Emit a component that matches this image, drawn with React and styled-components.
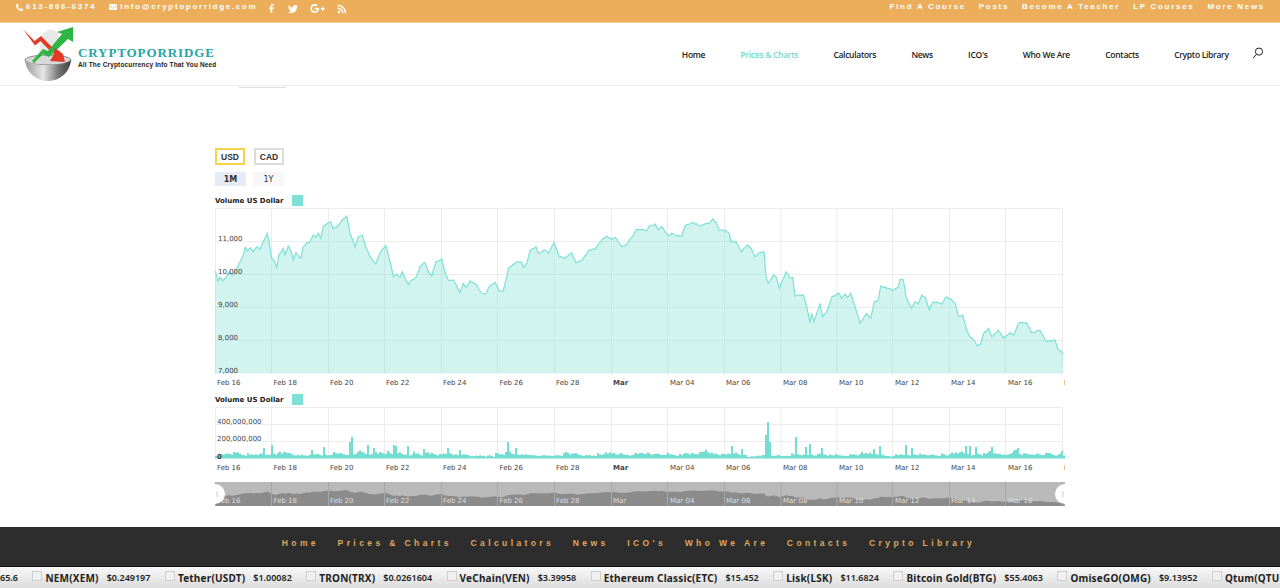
import React from 'react';
import styled, { createGlobalStyle } from 'styled-components';
import {
  FaPhoneAlt,
  FaEnvelope,
  FaFacebookF,
  FaTwitter,
  FaGooglePlusG,
  FaRss,
} from 'react-icons/fa';

const GlobalStyle = createGlobalStyle`
  html, body {
    margin: 0;
    padding: 0;
    background: #fff;
    font-family: "Liberation Sans", Arial, sans-serif;
  }
`;

const TEAL = '#7fe0d5';

/* price line traced from the reference, [x, y] pairs in two runs */
const tracedLeft = [
  [15, 212], [24, 243], [30, 232], [38, 242], [46, 235], [58, 215], [66, 226], [76, 215], [88, 190],
  [100, 165], [106, 142], [113, 153], [120, 143], [130, 155], [140, 140], [150, 148], [160, 125],
  [172, 100], [178, 130], [185, 175], [192, 180], [200, 205], [206, 165], [214, 155], [220, 145],
  [225, 165], [235, 138], [243, 152], [250, 180], [258, 157], [272, 175], [280, 140], [290, 128],
  [300, 125], [310, 105], [318, 112], [325, 100], [332, 115], [340, 78], [350, 72], [362, 65],
  [370, 87], [385, 75], [395, 62], [410, 48], [420, 100], [436, 142], [445, 110], [457, 105],
  [465, 135], [480, 170], [497, 192], [505, 172], [515, 150], [528, 137], [540, 185], [550, 230],
  [560, 222], [570, 232], [577, 215], [585, 235], [595, 253], [605, 240], [618, 232], [630, 200],
  [645, 188], [655, 215], [665, 228], [678, 185], [695, 177], [703, 210], [715, 240], [730, 240],
  [750, 278], [760, 250], [768, 262], [780, 243], [800, 255], [815, 280], [825, 283], [840, 258],
  [855, 247], [868, 272], [880, 272], [895, 205], [905, 197], [920, 185], [935, 188], [940, 202],
  [950, 190], [960, 152], [978, 140], [985, 160], [1005, 150], [1015, 160], [1032, 128], [1048, 170],
  [1065, 175], [1085, 158], [1098, 188], [1115, 182], [1135, 152], [1155, 148], [1175, 122],
  [1190, 108], [1205, 118], [1215, 112], [1235, 140], [1250, 132], [1265, 112], [1280, 88],
];
const tracedRight = [
  [0, 88], [20, 92], [28, 78], [45, 72], [55, 90], [65, 80], [85, 108], [95, 100], [105, 105],
  [125, 108], [135, 78], [160, 68], [180, 78], [210, 68], [218, 57], [230, 70], [238, 92], [255, 90],
  [268, 100], [272, 125], [288, 125], [305, 155], [322, 135], [335, 148], [345, 170], [360, 158],
  [372, 155], [378, 230], [385, 250], [400, 225], [408, 230], [418, 265], [438, 215], [450, 235],
  [458, 232], [465, 288], [490, 285], [500, 320], [510, 368], [515, 340], [522, 365], [540, 310],
  [548, 350], [560, 335], [575, 292], [597, 280], [605, 295], [615, 282], [622, 292], [632, 280],
  [645, 320], [660, 370], [680, 340], [692, 355], [703, 305], [715, 300], [722, 258], [745, 265],
  [757, 272], [775, 262], [780, 238], [790, 240], [798, 290], [815, 325], [825, 305], [835, 312],
  [845, 285], [855, 290], [868, 330], [880, 305], [905, 312], [920, 290], [945, 308], [955, 350],
  [968, 345], [980, 390], [990, 410], [1005, 425], [1012, 438], [1022, 432], [1030, 402], [1045, 385],
  [1055, 410], [1075, 390], [1090, 415], [1110, 398], [1122, 405], [1135, 370], [1160, 368],
  [1175, 398], [1200, 392], [1220, 425], [1245, 420], [1255, 450], [1270, 460],
];

const seeded = (start) => {
  let s = start;
  return () => {
    s = (s * 16807) % 2147483647;
    return s / 2147483647;
  };
};

const tracedPoints = [
  ...tracedLeft.map(([x, y]) => [210 + x / 3, 200 + y / 3]),
  ...tracedRight.map(([x, y]) => [640 + x / 3, 200 + y / 3]),
];

// page coordinates, made a bit more jagged between the traced points
const pricePoints = (() => {
  const rand = seeded(4711);
  const out = [];
  tracedPoints.forEach((p, i) => {
    out.push(p);
    const next = tracedPoints[i + 1];
    if (!next) return;
    const steps = Math.floor((next[0] - p[0]) / 1.5);
    for (let s = 1; s < steps; s += 1) {
      const t = s / steps;
      out.push([
        p[0] + (next[0] - p[0]) * t,
        p[1] + (next[1] - p[1]) * t + (rand() - 0.5) * 1.5,
      ]);
    }
  });
  return out;
})();

const pointsToPath = (pts, fn) =>
  pts.map((p, i) => `${i ? 'L' : 'M'}${fn(p).map((v) => v.toFixed(1)).join(' ')}`).join(' ');

const X_START = 215;
const MAIN_TOP = 208;
const VOL_TOP = 407;

const mainLine = pointsToPath(pricePoints, ([x, y]) => [x - X_START, y - MAIN_TOP]);
const mainArea = `${mainLine} L848 165.5 L0 165.5 Z`;

const navLine = pointsToPath(tracedPoints, ([x, y]) => [
  x - X_START,
  8 + ((y - 216) * 13) / 136,
]);
const navArea = `${navLine} L850 24 L0 24 Z`;

const spikes = {
  264: 448, 272: 445, 312: 450, 323: 447, 351: 437, 349: 442, 367: 445, 373: 448, 393: 445, 396: 446,
  407: 446, 424: 449, 447: 448, 459: 450, 507: 442, 515: 448, 731: 446, 741: 449, 765: 435, 767: 422,
  769: 442, 795: 437, 805: 447, 810: 444, 822: 448, 874: 449, 880: 446, 905: 445, 911: 448, 965: 446,
  970: 446, 975: 447, 991: 447, 1017: 448, 1061: 451,
};

const volumePath = (() => {
  const rand = seeded(90210);
  let d = 'M0 51.5';
  let level = 3;
  for (let x = X_START; x < 1065; x += 2) {
    level = level * 0.6 + (rand() * rand() * 11 + 1.6) * 0.4;
    const quiet = (x > 470 && x < 495) || (x > 745 && x < 760) ? 0.55 : 1;
    const spike = spikes[x] || spikes[x + 1];
    const top = spike ? spike - VOL_TOP : 51.5 - level * quiet;
    d += ` L${x - X_START} ${top.toFixed(1)} L${x - X_START + 2} ${top.toFixed(1)}`;
  }
  return `${d} L850 51.5 Z`;
})();

const gridX = [56.5, 113.5, 169.5, 226.5, 282.5, 339.5, 396.5, 452.5, 509.5, 566, 622, 677.5, 734.5, 790.5, 847.5];
const dateLabels = [
  ['Feb 16', 2], ['Feb 18', 58.5], ['Feb 20', 115], ['Feb 22', 171], ['Feb 24', 228], ['Feb 26', 284.5],
  ['Feb 28', 341], ['Mar', 398, true], ['Mar 04', 455], ['Mar 06', 511], ['Mar 08', 568], ['Mar 10', 624],
  ['Mar 12', 680], ['Mar 14', 736], ['Mar 16', 793], ['Mar 18', 849],
];

const topLinks = ['Find A Course', 'Posts', 'Become A Teacher', 'LP Courses', 'More News'];
const mainNav = ['Home', 'Prices & Charts', 'Calculators', 'News', "ICO's", 'Who We Are', 'Contacts', 'Crypto Library'];
const ticker = [
  ['NEM(XEM)', '$0.249197'],
  ['Tether(USDT)', '$1.00082'],
  ['TRON(TRX)', '$0.0261604'],
  ['VeChain(VEN)', '$3.39958'],
  ['Ethereum Classic(ETC)', '$15.452'],
  ['Lisk(LSK)', '$11.6824'],
  ['Bitcoin Gold(BTG)', '$55.4063'],
  ['OmiseGO(OMG)', '$9.13952'],
  ['Qtum(QTUM)', '$26.1180'],
];

const Page = styled.div`
  width: 1280px;
  height: 588px;
  display: flex;
  flex-direction: column;
  overflow: hidden;
`;

const TopBar = styled.div`
  height: 23px;
  box-sizing: border-box;
  flex: none;
  display: flex;
  justify-content: space-between;
  padding: 1px 15px 0 16px;
  background: #ecae5b;
  border-bottom: 1px solid #f2c98f;
  color: #fff;
  font-size: 8px;
  font-weight: 700;
  letter-spacing: 1.7px;
`;

const TopGroup = styled.div`
  display: flex;
  align-items: flex-start;
  height: 12px;
  line-height: 12px;
  gap: ${(p) => p.$gap || 0}px;
`;

const ContactItem = styled.span`
  display: flex;
  align-items: center;
  gap: 3px;
  margin-right: 13px;
`;

const SocialRow = styled.div`
  display: flex;
  align-items: center;
  gap: 12px;
  margin-left: -3px;
`;

const Header = styled.header`
  height: 63px;
  flex: none;
  box-sizing: border-box;
  display: flex;
  justify-content: space-between;
  background: #fff;
  border-bottom: 1px solid #efefef;
  padding: 3px 16px 0 22px;
`;

const Brand = styled.div`
  display: flex;
`;

const LogoText = styled.div`
  margin: 20px 0 0 2px;
  display: flex;
  flex-direction: column;
`;

const LogoName = styled.span`
  font-family: "Liberation Serif", serif;
  font-weight: 700;
  color: #25a6a6;
  font-size: 13px;
  line-height: 13px;
  letter-spacing: 0.9px;
`;

const LogoTag = styled.span`
  font-size: 6.5px;
  line-height: 8px;
  font-weight: 700;
  color: #222;
  letter-spacing: 0.15px;
  margin-top: 2px;
`;

const Nav = styled.nav`
  display: flex;
  align-items: flex-start;
  padding-top: 23px;
  font-family: "Open Sans", sans-serif;
  font-size: 8.5px;
  font-weight: 600;
  line-height: 12px;
  letter-spacing: -0.3px;
  gap: 35.3px;
`;

const NavItem = styled.a`
  color: ${(p) => (p.$active ? '#6fdccf' : '#222')};
  white-space: nowrap;
`;

const SearchIcon = styled.svg`
  width: 12px;
  height: 12px;
  margin: -2px 0 0 -12px;
`;

const Main = styled.main`
  flex: 1;
  padding-left: 215px;
  background: #fff;
  min-height: 0;
`;

const ClippedSelect = styled.div`
  width: 48px;
  height: 2px;
  margin-left: 23px;
  box-sizing: border-box;
  border: 1px solid #ddd;
  border-top: 0;
  border-radius: 0 0 3px 3px;
`;

const ButtonRow = styled.div`
  display: flex;
  gap: ${(p) => p.$gap}px;
  margin-top: ${(p) => p.$top}px;
`;

const CurrencyButton = styled.button`
  width: 30px;
  height: 17px;
  box-sizing: border-box;
  padding: 0;
  background: #fff;
  border: 2px solid ${(p) => (p.$active ? '#f4d24a' : '#dcdcdc')};
  color: #333;
  font-family: "Liberation Sans", sans-serif;
  font-size: 8.5px;
  font-weight: 700;
`;

const RangeButton = styled.button`
  width: 31px;
  height: 14px;
  padding: 0;
  border: 0;
  background: ${(p) => (p.$active ? '#e6ebf5' : '#f7f7f7')};
  color: #333;
  font-family: "DejaVu Sans", sans-serif;
  font-size: 8px;
  font-weight: ${(p) => (p.$active ? 700 : 400)};
`;

const Legend = styled.div`
  display: flex;
  align-items: center;
  height: 11px;
  margin-top: ${(p) => p.$top}px;
  font-family: "DejaVu Sans", sans-serif;
  font-size: 7px;
  font-weight: 700;
  color: #222;
`;

const LegendName = styled.span`
  width: 77px;
`;

const Swatch = styled.span`
  width: 11px;
  height: 11px;
  background: ${TEAL};
`;

const ChartSvg = styled.svg`
  display: block;
  width: 850px;
  height: ${(p) => p.$h}px;
  margin-top: ${(p) => p.$top}px;
  overflow: hidden;
`;

const AxisText = styled.text`
  font-family: "DejaVu Sans", sans-serif;
  font-size: 7px;
  fill: ${(p) => p.$color || '#444'};
  font-weight: ${(p) => (p.$bold ? 700 : 400)};
`;

const FooterNav = styled.nav`
  height: 39px;
  flex: none;
  box-sizing: border-box;
  display: flex;
  align-items: center;
  justify-content: center;
  padding: 0 23px 7px 0;
  background: #2d2d2d;
  font-size: 8.5px;
  font-weight: 700;
  letter-spacing: 3.4px;
  gap: 18.6px;
  color: #dfa85c;
`;

const FooterItem = styled.a`
  white-space: nowrap;
`;

const Ticker = styled.div`
  height: 22px;
  flex: none;
  box-sizing: border-box;
  display: flex;
  align-items: center;
  overflow: hidden;
  white-space: nowrap;
  border-top: 1px solid #111;
  background: linear-gradient(#f8f8f8, #dcdcdc);
  font-family: "Noto Sans", sans-serif;
  color: #222;
`;

const TickerPrice = styled.span`
  font-family: "Noto Sans", sans-serif;
  font-size: 9px;
  font-weight: 600;
`;

const TickerItem = styled.span`
  display: inline-flex;
  align-items: center;
  flex: none;
  margin-left: 14.5px;
`;

const BrokenImage = styled.span`
  width: 10px;
  height: 10px;
  margin: -3px 3px 0 0;
  box-sizing: border-box;
  border: 1px solid #cfcfcf;
  background: #f0f0f0;
`;

const TickerName = styled.span`
  font-size: 10px;
  font-weight: 700;
  margin-right: 8px;
  letter-spacing: 0.2px;
`;

function Logo() {
  return (
    <svg width="54" height="58" viewBox="0 0 54 58" style={{ flex: 'none' }}>
      <defs>
        <linearGradient id="bowl" x1="0" x2="1" y1="0" y2="0">
          <stop offset="0" stopColor="#9a9a9a" />
          <stop offset="0.4" stopColor="#e6e6e6" />
          <stop offset="0.72" stopColor="#777" />
          <stop offset="1" stopColor="#3f3f3f" />
        </linearGradient>
      </defs>
      <path d="M16 33 L20 8 L28 3 L36 6 L40 33 Z" fill="#e9e9e9" />
      <ellipse cx="26" cy="34" rx="23" ry="5" fill="#d8d8d8" stroke="#555" strokeWidth="0.7" />
      <path d="M3 34 C4 46 14 55 26 55 C38 55 48 46 49 34 C40 41 12 41 3 34 Z" fill="url(#bowl)" />
      <path d="M1 3 L12.5 15 L19 10 L33 24 L30 27 L18.5 15 L13 19.5 Z" fill="#e23a24" />
      <path
        d="M10 35 L21 23 L26 25 L40 8 L35 6 L51 1 L51 16 L46 13 L27 31 L21 28 L12 37 Z"
        fill="#2fb544"
      />
      <path d="M33 22 L41 28 L43 36 L28 35 L31 30 Z" fill="#e23a24" />
    </svg>
  );
}

const App = () => {
  const pageGrid = (h, color) =>
    [0.5, ...gridX].map((x) => <line key={x} x1={x} x2={x} y1="0" y2={h} stroke={color} strokeWidth="1" />);

  const hLines = (ys) =>
    ys.map((y) => <line key={y} x1="0" x2="848" y1={y} y2={y} stroke="#ececec" strokeWidth="1" />);

  const dates = (y, color) =>
    dateLabels.map(([t, x, bold]) => (
      <AxisText key={t} x={x} y={y} $color={color} $bold={bold && !color}>
        {t}
      </AxisText>
    ));

  return (
    <Page>
      <GlobalStyle />
      <TopBar>
        <TopGroup>
          <ContactItem>
            <FaPhoneAlt size={7} />
            613-806-6374
          </ContactItem>
          <ContactItem>
            <FaEnvelope size={8} />
            info@cryptoporridge.com
          </ContactItem>
          <SocialRow>
            <FaFacebookF size={9} />
            <FaTwitter size={10} />
            <FaGooglePlusG size={15} />
            <FaRss size={10} />
          </SocialRow>
        </TopGroup>
        <TopGroup $gap={13}>
          {topLinks.map((l) => (
            <span key={l}>{l}</span>
          ))}
        </TopGroup>
      </TopBar>

      <Header>
        <Brand>
          <Logo />
          <LogoText>
            <LogoName>CRYPTOPORRIDGE</LogoName>
            <LogoTag>All The Cryptocurrency Info That You Need</LogoTag>
          </LogoText>
        </Brand>
        <Nav>
          {mainNav.map((n) => (
            <NavItem key={n} $active={n === 'Prices & Charts'}>
              {n}
            </NavItem>
          ))}
          <SearchIcon viewBox="0 0 12 12" fill="none" stroke="#222" strokeWidth="1">
            <circle cx="7" cy="4.6" r="3.6" />
            <path d="M4.4 7.4 L1.2 11" />
          </SearchIcon>
        </Nav>
      </Header>

      <Main>
        <ClippedSelect />
        <ButtonRow $gap={9} $top={60}>
          <CurrencyButton $active>USD</CurrencyButton>
          <CurrencyButton>CAD</CurrencyButton>
        </ButtonRow>
        <ButtonRow $gap={7} $top={7}>
          <RangeButton $active>1M</RangeButton>
          <RangeButton>1Y</RangeButton>
        </ButtonRow>

        <Legend $top={9}>
          <LegendName>Volume US Dollar</LegendName>
          <Swatch />
        </Legend>
        <ChartSvg $h={180} $top={2} viewBox="0 0 850 180">
          {pageGrid(166, '#ececec')}
          {hLines([0.5, 33.5, 66.5, 99.5, 132.5])}
          <path d={mainArea} fill={TEAL} fillOpacity="0.36" />
          <path d={mainLine} fill="none" stroke={TEAL} strokeWidth="1.2" />
          <AxisText x="3" y="33">11,000</AxisText>
          <AxisText x="3" y="66">10,000</AxisText>
          <AxisText x="3" y="99">9,000</AxisText>
          <AxisText x="3" y="132">8,000</AxisText>
          <AxisText x="3" y="165">7,000</AxisText>
          {dates(177)}
        </ChartSvg>

        <Legend $top={6}>
          <LegendName>Volume US Dollar</LegendName>
          <Swatch />
        </Legend>
        <ChartSvg $h={65} $top={2} viewBox="0 0 850 65">
          {pageGrid(52, '#ececec')}
          {hLines([0.5, 17.5, 34.5])}
          <AxisText x="2" y="17">400,000,000</AxisText>
          <AxisText x="2" y="34">200,000,000</AxisText>
          <path d={volumePath} fill="#74ddd1" />
          <AxisText x="2" y="51.5" $bold>0</AxisText>
          {dates(63)}
        </ChartSvg>

        <ChartSvg $h={24} $top={10} viewBox="0 0 850 24">
          <rect width="850" height="24" fill="#b9b9b9" />
          <path d={navArea} fill="#8b8b8b" />
          {pageGrid(24, '#a8a8a8')}
          {dates(21, '#dedede')}
          <circle cx="0" cy="12" r="10" fill="#fff" />
          <circle cx="850" cy="12" r="10" fill="#fff" />
          <line x1="2" x2="2" y1="9" y2="15" stroke="#ccc" />
          <line x1="848" x2="848" y1="9" y2="15" stroke="#ccc" />
        </ChartSvg>
      </Main>

      <FooterNav>
        {mainNav.map((n) => (
          <FooterItem key={n}>{n}</FooterItem>
        ))}
      </FooterNav>

      <Ticker>
        <TickerPrice>65.6</TickerPrice>
        {ticker.map(([name, price]) => (
          <TickerItem key={name}>
            <BrokenImage />
            <TickerName>{name}</TickerName>
            <TickerPrice>{price}</TickerPrice>
          </TickerItem>
        ))}
      </Ticker>
    </Page>
  );
};

export default App;
